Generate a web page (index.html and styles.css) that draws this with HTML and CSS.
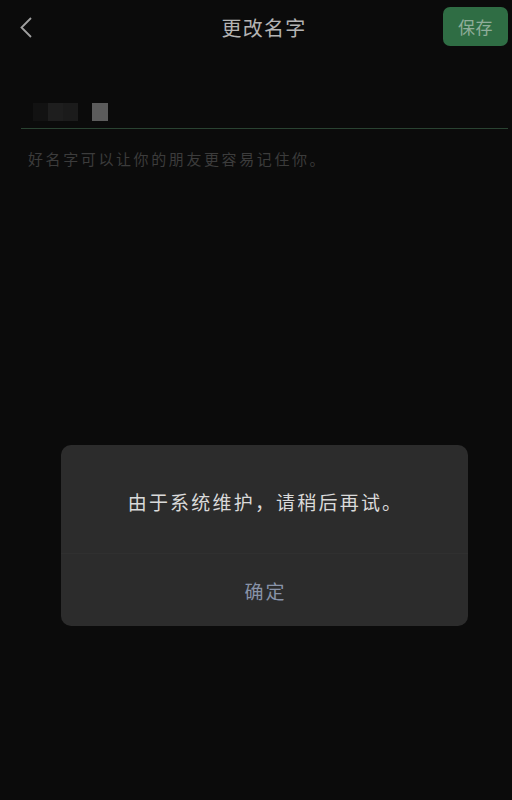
FILE: index.html
```html
<!DOCTYPE html>
<html lang="zh">
<head>
<meta charset="utf-8">
<link rel="stylesheet" href="styles.css">
</head>
<body>
<div class="page">
  <header class="bar">
    <div class="back">
      <svg width="16" height="24" viewBox="0 0 16 24"><path d="M13 3 L3.5 12.5 L13 22" fill="none" stroke="#a0a0a0" stroke-width="1.8"/></svg>
    </div>
    <div class="title">更改名字</div>
    <div class="save">保存</div>
  </header>
  <div class="field">
    <div class="name">
      <span class="m1"></span><span class="m2"></span><span class="m3"></span><span class="gap"></span><span class="m4"></span>
    </div>
  </div>
  <p class="hint">好名字可以让你的朋友更容易记住你。</p>
</div>
<div class="overlay">
  <div class="dialog">
    <div class="msg">由于系统维护，请稍后再试。</div>
    <div class="ok">确定</div>
  </div>
</div>
</body>
</html>
```
FILE: styles.css
```css
* { box-sizing: border-box; }
html, body { margin: 0; padding: 0; }
body {
  width: 512px;
  height: 800px;
  background: #0b0b0b;
  font-family: "Noto Sans CJK SC", "Noto Sans", sans-serif;
  position: relative;
  overflow: hidden;
}
.bar {
  height: 54px;
  display: flex;
  align-items: flex-start;
  justify-content: space-between;
  padding: 0 4px 0 18px;
  position: relative;
}
.back { width: 16px; height: 24px; margin-top: 15px; }
.back svg { display: block; }
.title {
  position: absolute;
  left: 16px; right: 0; top: 13px;
  text-align: center;
  font-size: 20px;
  line-height: 30px;
  letter-spacing: 1.3px;
  color: #b4b4b4;
  pointer-events: none;
}
.save {
  width: 65px;
  height: 39px;
  margin-top: 7px;
  background: #2f6d44;
  border-radius: 7px;
  color: #8fad9a;
  font-size: 17px;
  letter-spacing: 0.5px;
  display: flex;
  align-items: center;
  justify-content: center;
}
.field {
  margin: 0 4px 0 21px;
  padding: 49px 0 0 12px;
  height: 75px;
  border-bottom: 1px solid #2a4332;
}
.name { display: flex; height: 18px; }
.name span { display: block; height: 18px; }
.m1 { width: 15px; background: #121212; }
.m2 { width: 15px; background: #1e1e1e; }
.m3 { width: 15px; background: #1b1b1b; }
.gap { width: 14px; }
.m4 { width: 16px; background: #5c5c5c; }
.hint {
  margin: 19px 0 0 28px;
  font-size: 15px;
  line-height: 22px;
  letter-spacing: 2.6px;
  color: #3c3c3c;
}
.overlay {
  position: absolute;
  left: 0; top: 0; width: 512px; height: 800px;
}
.dialog {
  position: absolute;
  left: 61px; top: 445px;
  width: 407px;
  height: 181px;
  background: #2c2c2c;
  border-radius: 10px;
  display: flex;
  flex-direction: column;
}
.msg {
  height: 109px;
  display: flex;
  align-items: center;
  justify-content: center;
  font-size: 19px;
  letter-spacing: 2.2px;
  color: #dadada;
  padding: 4px 0 0 2px;
  border-bottom: 1px solid #303030;
}
.ok {
  flex: 1;
  display: flex;
  align-items: center;
  justify-content: center;
  font-size: 19px;
  letter-spacing: 2px;
  padding-left: 2px;
  color: #8893a8;
}
```
